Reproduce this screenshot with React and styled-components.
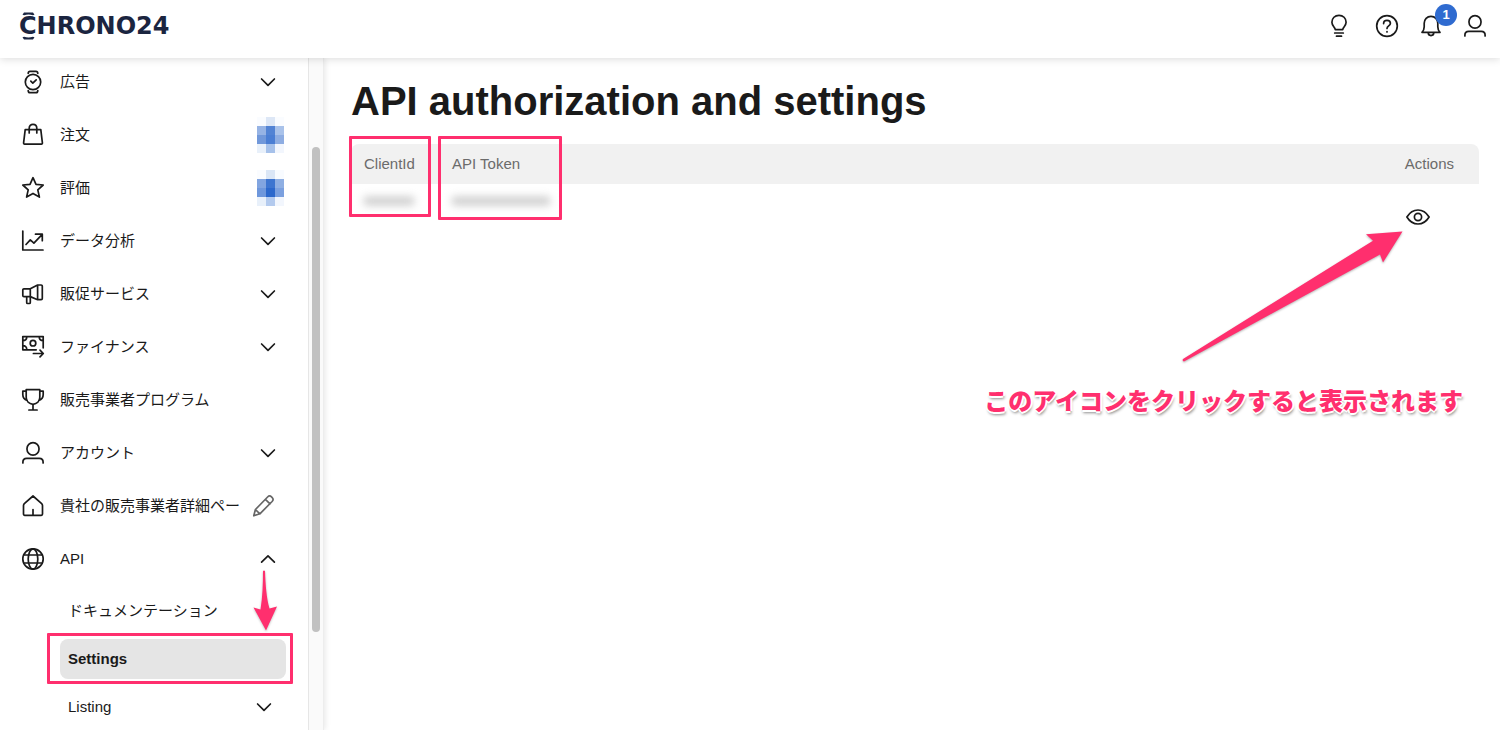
import React from "react";
import styled, { createGlobalStyle } from "styled-components";

const PINK = "#ff2f6e";

const GlobalStyle = createGlobalStyle`
	*, *::before, *::after {
		box-sizing: border-box;
	}
	body {
		margin: 0;
		background: #fff;
		color: #1a1a1a;
		font-family: "Liberation Sans", "Noto Sans CJK JP", sans-serif;
		font-size: 15px;
		line-height: 20px;
	}
	button {
		padding: 0;
		border: 0;
		background: none;
		color: inherit;
		font: inherit;
		cursor: pointer;
	}
	a {
		color: inherit;
		text-decoration: none;
	}
	ul {
		list-style: none;
		margin: 0;
		padding: 0;
	}
`;

const Page = styled.div`
	display: flex;
	flex-direction: column;
	height: 100vh;
	overflow: hidden;
`;

const Header = styled.header`
	position: relative;
	z-index: 2;
	display: flex;
	flex: none;
	align-items: center;
	justify-content: space-between;
	height: 58px;
	padding: 0 13px 6px 19px;
	background: #fff;
	box-shadow: 0 1px 8px rgba(0, 0, 0, 0.15);
`;

const Logo = styled.a`
	position: relative;
	color: #1b2540;
	font-family: "DejaVu Sans", sans-serif;
	font-size: 24px;
	font-weight: bold;
	line-height: 28px;
`;

const LogoLugs = styled.svg`
	position: absolute;
	left: 0;
	top: -2px;
`;

const HeaderNav = styled.nav`
	display: flex;
	gap: 20px;
`;

const HelpGroup = styled.div`
	display: flex;
	gap: 24px;
`;

const IconButton = styled.button`
	position: relative;
	display: flex;
	align-items: center;
	justify-content: center;
	width: ${(p) => p.$size || 24}px;
	height: ${(p) => p.$size || 24}px;
`;

const Count = styled.span`
	position: absolute;
	left: 16px;
	top: -10px;
	width: 22px;
	border-radius: 50%;
	background: #2f6bd0;
	color: #fff;
	font-size: 13px;
	font-weight: bold;
	line-height: 22px;
	text-align: center;
`;

const Body = styled.div`
	display: flex;
	flex: 1;
	min-height: 0;
`;

const Sidebar = styled.aside`
	display: flex;
	flex: none;
	width: 324px;
	box-shadow: 1px 0 6px rgba(0, 0, 0, 0.1);
`;

const Menu = styled.ul`
	display: flex;
	flex: 1;
	flex-direction: column;
	gap: 5px;
	overflow: hidden;
`;

const MenuLink = styled.a`
	display: flex;
	align-items: center;
	height: 48px;
	padding: 0 24px 0 21px;
`;

const MenuLabel = styled.span`
	flex: 1;
	margin-left: 15px;
	white-space: nowrap;
`;

const Slot = styled.span`
	display: flex;
	flex: none;
	justify-content: ${(p) => p.$align || "center"};
	width: 32px;
`;

const SubMenu = styled.ul`
	display: flex;
	flex-direction: column;
	gap: 8px;
	margin: 3px 22px 0 60px;
`;

const SubLink = styled.a`
	position: relative;
	display: flex;
	align-items: center;
	justify-content: space-between;
	height: 40px;
	padding: 0 10px 0 8px;
	border-radius: 8px;
	background: ${(p) => (p.$active ? "#e5e5e5" : "transparent")};
	font-weight: ${(p) => (p.$active ? "bold" : "normal")};
`;

const ScrollTrack = styled.div`
	display: grid;
	grid-template-rows: 89fr 485fr 98fr;
	width: 16px;
	padding: 0 3px;
	border-left: 1px solid #e6e6e6;
	border-right: 1px solid #ededed;
	background: #fafafa;
`;

const ScrollThumb = styled.div`
	grid-row: 2;
	border-radius: 5px;
	background: #c1c1c1;
`;

const Main = styled.main`
	position: relative;
	flex: 1;
	min-width: 0;
	padding: 19px 21px 0 27px;
`;

const Title = styled.h1`
	margin: 0 0 19px;
	font-size: 40px;
	line-height: 48px;
`;

const Table = styled.table`
	width: 100%;
	border-collapse: separate;
	border-spacing: 0;
	table-layout: fixed;
`;

const Th = styled.th`
	position: relative;
	width: ${(p) => p.$width || "auto"};
	height: 40px;
	padding: 0 25px 0 13px;
	background: #f1f1f1;
	color: #6b6b6b;
	font-weight: normal;
	text-align: ${(p) => p.$align || "left"};
	white-space: nowrap;

	&:first-child {
		border-top-left-radius: 8px;
	}
	&:last-child {
		border-top-right-radius: 8px;
	}
`;

const Td = styled.td`
	padding: 9px 37px 9px 13px;
	vertical-align: top;

	${IconButton} {
		margin-left: auto;
	}
`;

const Masked = styled.span`
	display: block;
	width: ${(p) => p.$width};
	height: 8px;
	margin-top: 4px;
	background: #c8c8c8;
	filter: blur(4px);
`;

const Marker = styled.span`
	position: absolute;
	inset: ${(p) => p.$inset};
	width: ${(p) => p.$width || "auto"};
	border: 3px solid ${PINK};
	border-radius: 1px;
	pointer-events: none;
`;

const SmallArrow = styled.svg`
	position: absolute;
	right: 8px;
	top: -69px;
	fill: ${PINK};
	filter: drop-shadow(0 1px 1px rgba(0, 0, 0, 0.25));
`;

const Callout = styled.div`
	position: absolute;
	top: 170px;
	right: 37px;
	display: flex;
	flex-direction: column;
	align-items: flex-end;
	gap: 20px;
	color: ${PINK};
	font-size: 24px;
	font-weight: 900;
	line-height: 36px;
	white-space: nowrap;
	pointer-events: none;
	text-shadow: 2px 0 #fff, -2px 0 #fff, 0 2px #fff, 0 -2px #fff,
		1px 3px 3px rgba(0, 0, 0, 0.45);

	svg {
		margin-right: 58px;
		fill: ${PINK};
		filter: drop-shadow(0 1px 1px rgba(0, 0, 0, 0.3));
	}
`;

const icons = {
	watch: (
		<>
			<circle cx="12" cy="12" r="7.7" />
			<path d="M7.2 3.4C7.3 2 8 1.3 9 1.3h6c1 0 1.7.7 1.8 2.1M7.2 20.6c.1 1.4.8 2.1 1.8 2.1h6c1 0 1.7-.7 1.8-2.1M9.8 11.2l2 1.9 3.4-3.3" />
		</>
	),
	bag: (
		<path d="M4.2 6.7h15.6l1.6 13.2c.1.8-.3 1.3-1 1.3H3.6c-.7 0-1.1-.5-1-1.3zM8.2 10V5.3C8.2 3 9.8 1.3 12 1.3s3.8 1.7 3.8 4V10" />
	),
	star: (
		<path d="M12 1.7l3 6.6 7.2.7-5.4 4.9 1.6 7.2L12 17.4l-6.4 3.7 1.6-7.2L1.8 9 9 8.3z" />
	),
	chart: <path d="M1.8 2v19H22M5 15.5l4.3-4.6 3.6 3.2L21 5.6M14.5 5.2h6.8v6.5" />,
	megaphone: (
		<path d="M9.3 6.8H2.9c-.6 0-1.1.5-1.1 1.1v5.6c0 .6.5 1.1 1.1 1.1h6.4l7.3 3.1h3.5c.7 0 1.2-.5 1.2-1.2V4.2c0-.7-.5-1.2-1.2-1.2h-3.5L9.3 6.8v7.8M16.6 3v14.7M5.7 14.6v5.8c0 .7.4 1.1 1 1.1h1.6c.6 0 1-.4 1-1.1v-5.8" />
	),
	finance: (
		<>
			<circle cx="12" cy="8.2" r="2.8" />
			<path d="M22.2 12.8V1.6H1.8v13.2h13.4M1.8 5.7c2.8 0 4-1.4 4-4.1M22.2 5.7c-2.8 0-4-1.4-4-4.1M1.8 10.7c2.8 0 4 1.4 4 4.1M12.4 18.5h9.8M19 15.2l3.3 3.3-3.3 3.3" />
		</>
	),
	trophy: (
		<path d="M5.2 1.7h13.6v7.6c0 4-3 6.6-6.8 7-3.8-.4-6.8-3-6.8-7zM5.2 3.2H1.8v3.3c0 3 1.6 5 4.4 5.9M18.8 3.2h3.4v3.3c0 3-1.6 5-4.4 5.9M12 16.3V22M7.9 22h8.2" />
	),
	user: (
		<>
			<rect x="6" y="1.6" width="12" height="12.6" rx="6" />
			<path d="M1.9 22v-.9c0-2.4 1.4-3.8 3.8-3.8h12.6c2.4 0 3.8 1.4 3.8 3.8v.9" />
		</>
	),
	home: <path d="M12 2l8.4 7.3c.8.7 1.1 1.3 1.1 2.2v8.6c0 .7-.5 1.2-1.2 1.2H3.7c-.7 0-1.2-.5-1.2-1.2v-8.6c0-.9.3-1.5 1.1-2.2zM12 15.6v5.4" />,
	globe: (
		<>
			<circle cx="12" cy="12" r="10.2" />
			<ellipse cx="12" cy="12" rx="4.8" ry="10.2" />
			<path d="M2.8 8h18.4M2.8 16h18.4" />
		</>
	),
	pencil: (
		<path d="M1.8 21.8l1.6-6.3L15.6 3c1.2-1.2 2.8-1.2 3.9-.1l.7.7c1.1 1.1 1 2.7-.1 3.9L7.9 19.8zM3.4 15.5l4.5 4.3M13.4 5.3l4.6 4.5" />
	),
	down: <path d="M5.6 9l6.4 6.3L18.400 9" />,
	up: <path d="M5.6 15.2L12 8.9l6.4 6.3" />,
	bulb: (
		<path d="M8.3 15.7C8.1 13 4.9 12 4.9 8.3c0-4.1 3-7 7.1-7s7.1 2.9 7.1 7c0 3.7-3.2 4.7-3.4 7.4zM7.7 19h8.6M9.5 22.2h5" />
	),
	help: (
		<>
			<circle cx="12" cy="12" r="10.3" />
			<path d="M8.6 9.6c0-2 1.4-3.3 3.4-3.3s3.4 1.2 3.4 3c0 2.6-3.4 2.6-3.4 5.2M12 17.600v.4" />
		</>
	),
	bell: (
		<path d="M3 18.3c1.7-1.7 2.2-3.2 2.2-5.6V9.3c0-4 2.8-7 6.8-7s6.8 3 6.8 7v3.4c0 2.4.5 3.9 2.2 5.6zM9.2 18.6c0 1.9 1.1 3 2.8 3s2.8-1.1 2.8-3" />
	),
	eye: (
		<>
			<path d="M.9 12C3.7 7.4 7.6 5 12 5s8.3 2.4 11.1 7c-2.8 4.6-6.7 7-11.1 7S3.7 16.6.9 12z" />
			<circle cx="12" cy="12" r="3.6" />
		</>
	),
};

function Icon({ name, color = "#1a1a1a" }) {
	return (
		<svg
			width="24"
			height="24"
			viewBox="0 0 24 24"
			fill="none"
			stroke={color}
			strokeWidth="1.7"
			strokeLinecap="round"
			strokeLinejoin="round"
			aria-hidden="true"
		>
			{icons[name]}
		</svg>
	);
}

// pixelated counters, three cells per row
const orderCells = [
	"#fafcff", "#dde7f6", "#fafcff",
	"#96b3e4", "#5283d4", "#a9c2ea",
	"#7198da", "#4a7ed4", "#8eade2",
	"#e8f0fa", "#a6c1ea", "#f2f6fd",
];
const ratingCells = [
	"#fafcff", "#dae6f6", "#f8fbff",
	"#82a5e0", "#3d75d0", "#8fafe3",
	"#6e97dc", "#2c68cc", "#7ba0df",
	"#e8f0fa", "#b3caee", "#f2f6fd",
];

function Mosaic({ cells }) {
	return (
		<svg width="27" height="36" shapeRendering="crispEdges" aria-hidden="true">
			{cells.map((fill, i) => (
				<rect
					key={i}
					x={(i % 3) * 9}
					y={Math.floor(i / 3) * 9}
					width="9"
					height="9"
					fill={fill}
				/>
			))}
		</svg>
	);
}

const menu = [
	{ icon: "watch", label: "広告", arrow: "down" },
	{ icon: "bag", label: "注文", cells: orderCells },
	{ icon: "star", label: "評価", cells: ratingCells },
	{ icon: "chart", label: "データ分析", arrow: "down" },
	{ icon: "megaphone", label: "販促サービス", arrow: "down" },
	{ icon: "finance", label: "ファイナンス", arrow: "down" },
	{ icon: "trophy", label: "販売事業者プログラム" },
	{ icon: "user", label: "アカウント", arrow: "down" },
	{ icon: "home", label: "貴社の販売事業者詳細ペー", edit: true },
	{ icon: "globe", label: "API", arrow: "up" },
];

function MenuItem({ item }) {
	return (
		<li>
			<MenuLink href="#">
				<Icon name={item.icon} />
				<MenuLabel>{item.label}</MenuLabel>
				{item.arrow && (
					<Slot>
						<Icon name={item.arrow} />
					</Slot>
				)}
				{item.cells && (
					<Slot $align="flex-end">
						<Mosaic cells={item.cells} />
					</Slot>
				)}
				{item.edit && (
					<Slot $align="flex-start">
						<Icon name="pencil" color="#666" />
					</Slot>
				)}
			</MenuLink>
		</li>
	);
}

function App() {
	return (
		<Page>
			<GlobalStyle />
			<Header>
				<Logo href="#">
					CHRONO24
					<LogoLugs width="20" height="32" fill="#1b2540" aria-hidden="true">
						<path d="M3.500 4.800L5 2.400h9l1.500 2.400-1.600.5c-2.800-1-6-1-8.800 0z" />
						<path d="M3.500 27.200L5 29.600h9l1.500-2.400-1.600-.5c-2.800 1-6 1-8.800 0z" />
					</LogoLugs>
				</Logo>
				<HeaderNav>
					<HelpGroup>
						<IconButton aria-label="ヒント">
							<Icon name="bulb" />
						</IconButton>
						<IconButton aria-label="ヘルプ">
							<Icon name="help" />
						</IconButton>
					</HelpGroup>
					<IconButton aria-label="通知">
						<Icon name="bell" />
						<Count>1</Count>
					</IconButton>
					<IconButton aria-label="アカウント">
						<Icon name="user" />
					</IconButton>
				</HeaderNav>
			</Header>
			<Body>
				<Sidebar>
					<Menu>
						{menu.map((item) => (
							<MenuItem key={item.label} item={item} />
						))}
						<li>
							<SubMenu>
								<li>
									<SubLink href="#">ドキュメンテーション</SubLink>
								</li>
								<li>
									<SubLink href="#" $active>
										Settings
										<Marker $inset="-6px -7px -5px -13px" />
										<SmallArrow width="26" height="62" aria-hidden="true">
											<path d="M11 1q1-1 2 0c.5 14 1.500 27 4.500 37.500L25 36.500 14 60.500 1.500 37.500 8.500 39.500C10.500 27 11 14 11 1z" />
										</SmallArrow>
									</SubLink>
								</li>
								<li>
									<SubLink href="#">
										Listing
										<Icon name="down" />
									</SubLink>
								</li>
							</SubMenu>
						</li>
					</Menu>
					<ScrollTrack>
						<ScrollThumb />
					</ScrollTrack>
				</Sidebar>
				<Main>
					<Title>API authorization and settings</Title>
					<Table>
						<thead>
							<tr>
								<Th $width="88px">
									ClientId
									<Marker $inset="-8px auto -33px -2px" $width="82px" />
								</Th>
								<Th>
									API Token
									<Marker $inset="-8px auto -36px -1px" $width="124px" />
								</Th>
								<Th $align="right">Actions</Th>
							</tr>
						</thead>
						<tbody>
							<tr>
								<Td>
									<Masked $width="50px" />
								</Td>
								<Td>
									<Masked $width="98px" />
								</Td>
								<Td>
									<IconButton $size={48} aria-label="表示">
										<Icon name="eye" />
									</IconButton>
								</Td>
							</tr>
						</tbody>
					</Table>
					<Callout>
						<svg width="224" height="136" viewBox="0 0 224 136" aria-hidden="true">
							<path d="M2 131q-1 2 1 2.500L199 26.500l3 8L221.500 3.500 185 6.300l7 6.400z" />
						</svg>
						このアイコンをクリックすると表示されます
					</Callout>
				</Main>
			</Body>
		</Page>
	);
}

export default App;
